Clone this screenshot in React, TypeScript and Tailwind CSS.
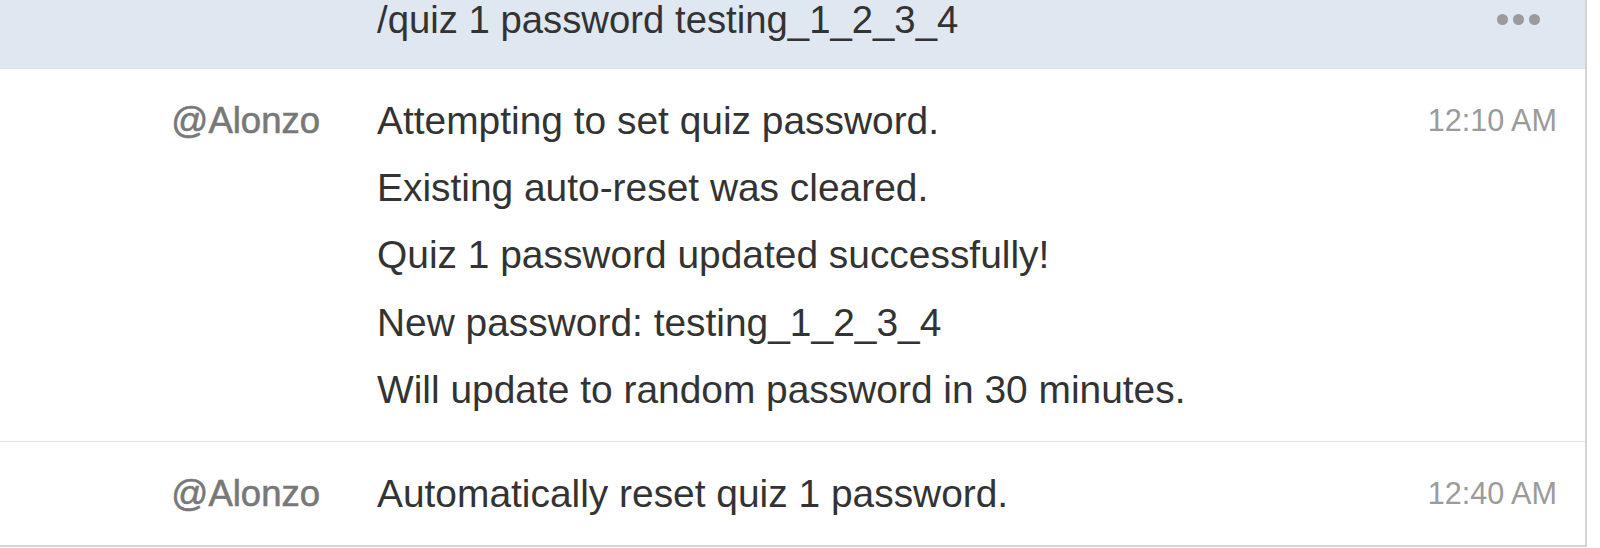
const messages = [
  {
    user: '@Alonzo',
    time: '12:10 AM',
    lines: [
      'Attempting to set quiz password.',
      'Existing auto-reset was cleared.',
      'Quiz 1 password updated successfully!',
      'New password: testing_1_2_3_4',
      'Will update to random password in 30 minutes.',
    ],
  },
  {
    user: '@Alonzo',
    time: '12:40 AM',
    lines: ['Automatically reset quiz 1 password.'],
  },
];

function MessageRow({ user, time, lines, last }: { user: string; time: string; lines: string[]; last: boolean }) {
  return (
    <div
      className={`grid grid-cols-[320px_1fr_auto] gap-x-[57px] py-[17.6px] pr-[28px] ${
        last ? '' : 'border-b border-[#e6e6e6]'
      }`}
    >
      <div className="text-right text-[36.5px] leading-[67.4px] text-[#787878] [-webkit-text-stroke:0.6px_#787878]">
        {user}
      </div>
      <div className="text-[38.9px] leading-[67.4px] text-[#333333]">
        {lines.map((l, i) => (
          <div key={i}>{l}</div>
        ))}
      </div>
      <div className="text-[30.6px] leading-[67.4px] text-[#9b9b9b]">{time}</div>
    </div>
  );
}

export default function App() {
  return (
    <div className="h-[548px] w-[1600px] overflow-hidden bg-white font-['Liberation_Sans',Arial,sans-serif]">
      <div className="w-[1587px] border-r-2 border-b-2 border-[#d4d4d4]">
        {/* previous (selected) message, cut off at the top */}
        <div className="flex h-[69px] items-start bg-[#dfe8f1] pt-[1px]">
          <span className="ml-[377px] text-[38.3px] leading-[38px] text-[#333333]">
            /quiz 1 password testing_1_2_3_4
          </span>
          <div className="ml-auto mr-[45px] mt-[13px] flex gap-[5px]">
            <span className="h-[11px] w-[11px] rounded-full bg-[#9b9b9b]" />
            <span className="h-[11px] w-[11px] rounded-full bg-[#9b9b9b]" />
            <span className="h-[11px] w-[11px] rounded-full bg-[#9b9b9b]" />
          </div>
        </div>
        {messages.map((m, i) => (
          <MessageRow key={i} {...m} last={i === messages.length - 1} />
        ))}
      </div>
    </div>
  );
}
